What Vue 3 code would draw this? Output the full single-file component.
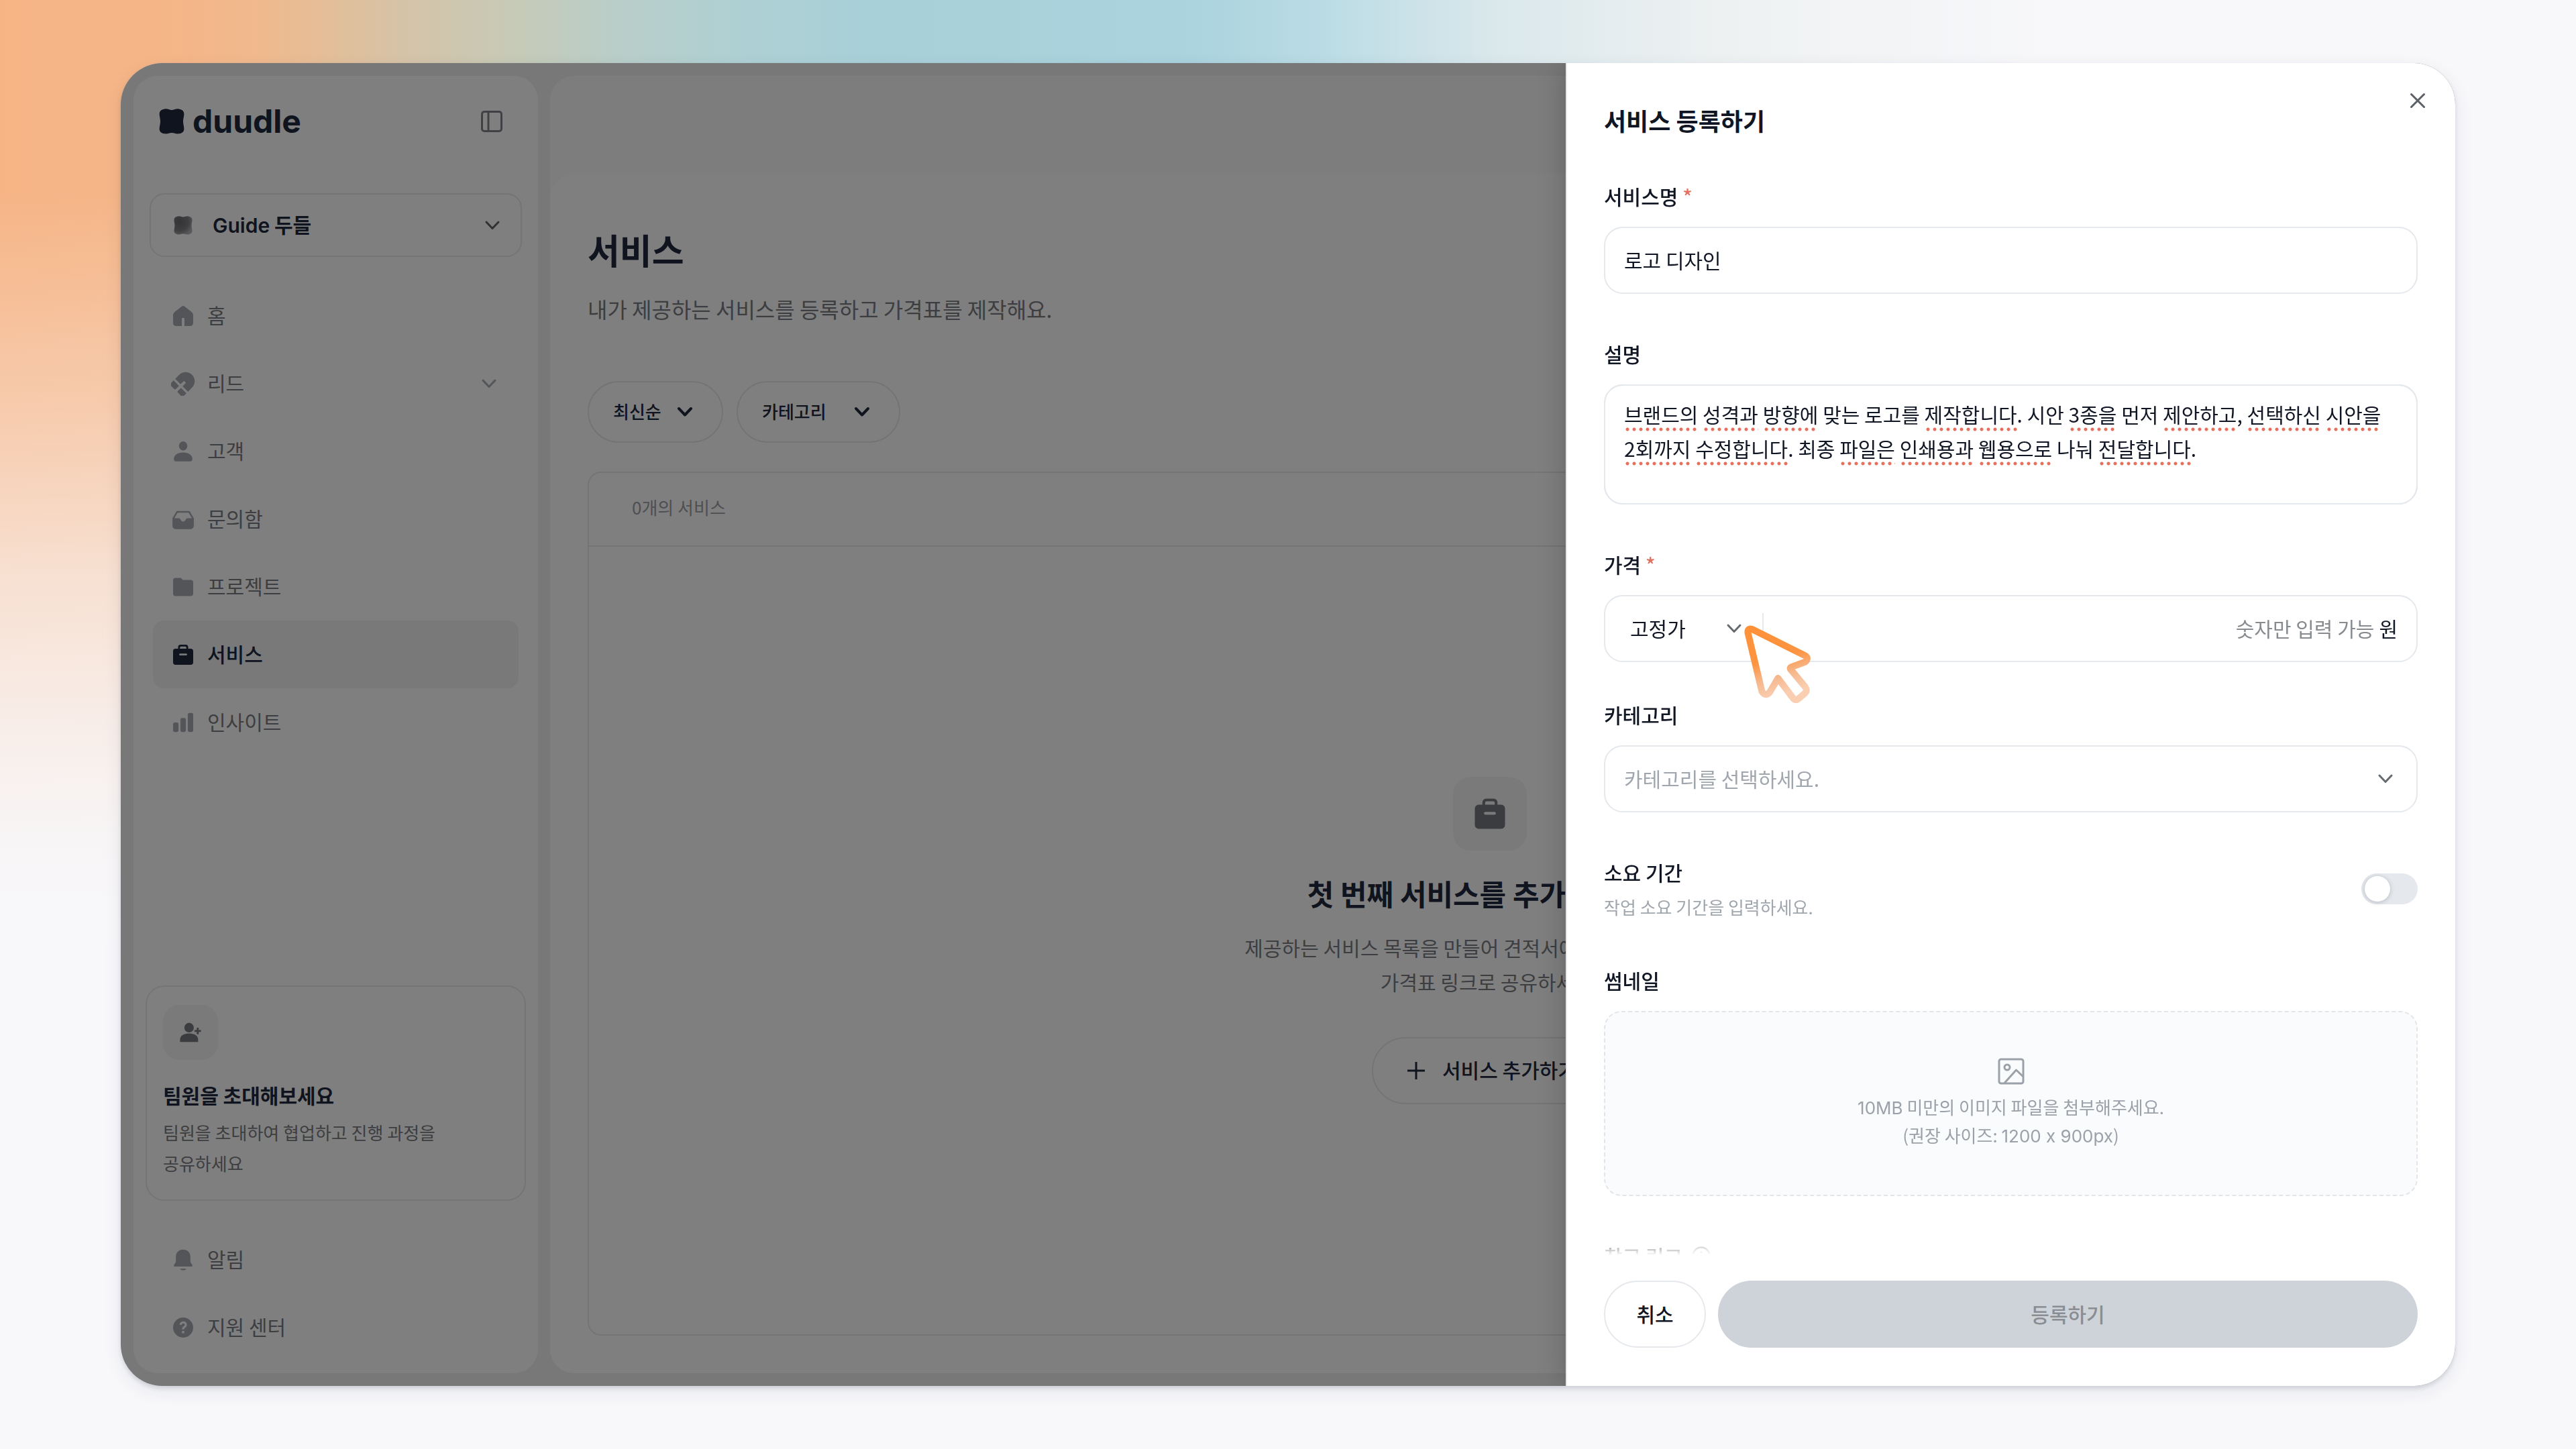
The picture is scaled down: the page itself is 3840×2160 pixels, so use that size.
<script setup>
import { ref } from 'vue'

const navItems = [
  { id: 'home', label: '홈' },
  { id: 'lead', label: '리드', expandable: true },
  { id: 'customer', label: '고객' },
  { id: 'inbox', label: '문의함' },
  { id: 'project', label: '프로젝트' },
  { id: 'service', label: '서비스', active: true },
  { id: 'insight', label: '인사이트' },
]

const supportItems = [
  { id: 'bell', label: '알림' },
  { id: 'help', label: '지원 센터' },
]

const icons = {
  home: '<path d="M10.4 2.7a2.6 2.6 0 0 1 3.2 0l7 5.4A3.6 3.6 0 0 1 22 11v8a3 3 0 0 1-3 3h-5.7v-8h-2.6v8H5a3 3 0 0 1-3-3v-8a3.6 3.6 0 0 1 1.4-2.9z"/>',
  lead: '<g transform="rotate(45 12 12)"><path d="M3 14.2V8.5a9 9 0 0 1 18 0v5.7h-7.6V9.4h-2.8v4.8z"/><path d="M3 16.4h7.6v4.2a1.4 1.4 0 0 1-1.4 1.4H4.4A1.4 1.4 0 0 1 3 20.6z"/><path d="M13.4 16.4H21v4.2a1.4 1.4 0 0 1-1.4 1.4h-4.8a1.4 1.4 0 0 1-1.4-1.4z"/></g>',
  customer: '<ellipse cx="12" cy="6.5" rx="4.2" ry="4.5"/><path d="M2.8 19.5C2.8 15.5 6.5 13 12 13s9.2 2.5 9.2 6.5c0 1.7-.8 2.3-2 2.3H4.800c-1.2 0-2-.6-2-2.3z"/>',
  inbox: '<path d="M6 4.7h12l3.800 6.6v7.4a2.3 2.3 0 0 1-2.3 2.3h-15a2.3 2.3 0 0 1-2.3-2.3v-7.4z" fill="none" stroke="currentColor" stroke-width="1.6" stroke-linejoin="round"/><path d="M2 11h5.500c1.200 0 1.600.8 2.100 1.700.5 1 1.200 1.700 2.400 1.700s1.900-.7 2.400-1.700c.5-.9.900-1.700 2.100-1.700H22v7.500a2.500 2.500 0 0 1-2.500 2.500h-15A2.500 2.500 0 0 1 2 18.500z"/>',
  project: '<path d="M2 5.500A2.500 2.500 0 0 1 4.500 3h4.200c.8 0 1.500.3 2 .900l1 1.100h7.800A2.500 2.500 0 0 1 22 7.500v11a2.500 2.500 0 0 1-2.500 2.500h-15A2.500 2.500 0 0 1 2 18.500z"/>',
  service: '<path fill-rule="evenodd" d="M7 6V4.500A2.500 2.500 0 0 1 9.500 2h5A2.500 2.500 0 0 1 17 4.500V6h2.500A2.500 2.500 0 0 1 22 8.500v11a2.500 2.500 0 0 1-2.500 2.500h-15A2.500 2.500 0 0 1 2 19.500v-11A2.500 2.500 0 0 1 4.500 6zm1.800 0h6.400V4.800a1 1 0 0 0-1-1H9.800a1 1 0 0 0-1 1zM9 10.800a.9.900 0 0 0 0 1.900h6a.9.900 0 0 0 0-1.900z"/>',
  insight: '<rect x="2" y="12" width="5.400" height="9.500" rx="1.600"/><rect x="9.300" y="7.500" width="5.400" height="14" rx="1.600"/><rect x="16.600" y="2.500" width="5.400" height="19" rx="1.600"/>',
  bell: '<path d="M12 1.800c-4.300 0-7.200 3-7.200 7v5.400l-1.900 2.900c-.5.800 0 1.500.8 1.500h16.600c.8 0 1.300-.7.800-1.500l-1.900-2.900V8.800c0-4-2.900-7-7.200-7z"/><path d="M9 20.800h6c-.3 1-1.400 1.600-3 1.600s-2.700-.6-3-1.600z"/>',
  help: '<path fill-rule="evenodd" d="M12 2a10 10 0 1 1 0 20 10 10 0 0 1 0-20zM8.600 9.400h2c0-1 .6-1.600 1.500-1.600s1.500.6 1.500 1.400c0 .8-.5 1.200-1.200 1.700-.9.600-1.400 1.200-1.400 2.500v.5h2v-.4c0-.6.300-.9 1-1.400 1-.7 1.700-1.500 1.700-2.900 0-2-1.500-3.300-3.600-3.300-2.200 0-3.500 1.400-3.500 3.500zM12 15.200a1.300 1.300 0 1 0 0 2.600 1.300 1.300 0 0 0 0-2.600z"/>',
}

const name = ref('로고 디자인')
const price = ref('')
const hasPeriod = ref(false)

// Each line is cut where the spelling check starts or ends; odd entries are the marked words
const lines = [
  ['', '브랜드의', ' ', '성격과', ' ', '방향에', ' 맞는 로고를 ', '제작합니다', '. 시안 ', '3종을', ' 먼저 ', '제안하고', ', ', '선택하신', ' ', '시안을'],
  ['', '2회까지', ' ', '수정합니다', '. 최종 ', '파일은', ' ', '인쇄용과', ' ', '웹용으로', ' 나눠 ', '전달합니다', '.'],
]
const description = ref(lines.map((line) => line.join('')).join(' '))

// Advance widths of the form's typeface in em
function advance(text) {
  let width = 0
  for (const char of text) {
    if (char === ' ') width += 0.224
    else if (char === '.' || char === ',') width += 0.278
    else if (char >= '0' && char <= '9') width += 0.555
    else width += 0.92
  }
  return width
}
const marks = lines.map((line) =>
  line.map((text, i) => ({ flagged: i % 2 === 1, width: `${advance(text).toFixed(3)}em` })),
)
</script>

<template>
  <div class="page">
    <div class="window">
      <aside class="sidebar">
        <header class="brand-row">
          <a class="brand" href="#">
            <svg class="brand-mark" viewBox="0 0 38 38" fill="currentColor" aria-hidden="true">
              <path d="M8 .6C13-.4 15 2 19 2S25-.4 30 .6c5 .9 7.700 3.400 7.300 8.400-.3 4-1.300 6-1.300 10s1 6 1.300 10c.4 5-2.300 7.500-7.300 8.300-5 .7-7-1.300-11-1.300s-6 2-11 1.300C3 36.500.3 34 .7 29 1 25 2 23 2 19S1 13 .7 9C.3 4 3 1.500 8 .6z" />
            </svg>
            <span class="brand-name">duudle</span>
          </a>
          <button class="icon-button" type="button" aria-label="사이드바 접기">
            <svg class="panel-icon" viewBox="0 0 32 32" fill="none" stroke="currentColor" stroke-width="3" aria-hidden="true">
              <rect x="1.500" y="1.500" width="29" height="29" rx="3.500" />
              <path d="M11 1.500v29" />
            </svg>
          </button>
        </header>

        <button class="workspace" type="button" aria-haspopup="listbox">
          <svg class="workspace-mark" viewBox="0 0 38 38" aria-hidden="true">
            <defs>
              <radialGradient id="mark-fill" cx=".3" cy=".3" r=".8">
                <stop offset="0" stop-color="#68686c" />
                <stop offset=".6" stop-color="#7c7c80" />
                <stop offset="1" stop-color="#b4b4b8" />
              </radialGradient>
            </defs>
            <path fill="url(#mark-fill)" d="M8 .6C13-.4 15 2 19 2S25-.4 30 .6c5 .9 7.700 3.400 7.300 8.400-.3 4-1.300 6-1.300 10s1 6 1.300 10c.4 5-2.300 7.500-7.300 8.300-5 .7-7-1.300-11-1.300s-6 2-11 1.300C3 36.500.3 34 .7 29 1 25 2 23 2 19S1 13 .7 9C.3 4 3 1.500 8 .6z" />
          </svg>
          <span class="workspace-name"><span class="latin">Guide</span> 두들</span>
          <svg class="chevron" viewBox="0 0 24 24" aria-hidden="true"><path d="M3 7l9 9.500L21 7" /></svg>
        </button>

        <nav class="nav" aria-label="주 메뉴">
          <a v-for="item in navItems" :key="item.id" class="nav-item" :class="{ active: item.active }" href="#">
            <svg class="nav-icon" viewBox="0 0 24 24" fill="currentColor" aria-hidden="true" v-html="icons[item.id]" />
            <span class="nav-label">{{ item.label }}</span>
            <svg v-if="item.expandable" class="chevron" viewBox="0 0 24 24" aria-hidden="true"><path d="M3 7l9 9.500L21 7" /></svg>
          </a>
        </nav>

        <section class="invite">
          <span class="invite-tile">
            <svg class="nav-icon" viewBox="0 0 24 24" fill="currentColor" aria-hidden="true">
              <circle cx="10.500" cy="7" r="5" />
              <path d="M1 19.500c0-4 3.800-6.500 9.500-6.500s9.500 2.500 9.500 6.500V22H1z" />
              <path d="M18.600 7h2v2.500H23v2h-2.400V14h-2v-2.500h-2.400v-2h2.400z" />
            </svg>
          </span>
          <h2 class="invite-title">팀원을 초대해보세요</h2>
          <p class="invite-text">팀원을 초대하여 협업하고 진행 과정을<br>공유하세요</p>
        </section>

        <nav class="nav support" aria-label="보조 메뉴">
          <a v-for="item in supportItems" :key="item.id" class="nav-item" href="#">
            <svg class="nav-icon" viewBox="0 0 24 24" fill="currentColor" aria-hidden="true" v-html="icons[item.id]" />
            <span class="nav-label">{{ item.label }}</span>
          </a>
        </nav>
      </aside>

      <main class="main">
        <div class="content">
          <h1 class="page-title">서비스</h1>
          <p class="page-text">내가 제공하는 서비스를 등록하고 가격표를 제작해요.</p>

          <div class="filters">
            <div class="stack">
              <select class="pill pill-sort" aria-label="정렬"><option>최신순</option></select>
              <svg class="chevron bold" viewBox="0 0 24 24" aria-hidden="true"><path d="M3 7l9 9.500L21 7" /></svg>
            </div>
            <div class="stack">
              <select class="pill pill-category" aria-label="카테고리 필터"><option>카테고리</option></select>
              <svg class="chevron bold" viewBox="0 0 24 24" aria-hidden="true"><path d="M3 7l9 9.500L21 7" /></svg>
            </div>
          </div>

          <section class="list">
            <header class="list-head">0개의 서비스</header>
            <div class="empty">
              <span class="empty-tile">
                <svg class="empty-icon" viewBox="0 0 24 24" fill="currentColor" aria-hidden="true" v-html="icons.service" />
              </span>
              <h2 class="empty-title">첫 번째 서비스를 추가해보세요</h2>
              <p class="empty-text">제공하는 서비스 목록을 만들어 견적서에 간편하게 활용하고<br>가격표 링크로 공유하세요.</p>
              <button class="add" type="button">
                <svg class="plus" viewBox="0 0 26 26" fill="none" stroke="currentColor" stroke-width="3" aria-hidden="true"><path d="M13 0v26M0 13h26" /></svg>
                <span class="add-label">서비스 추가하기</span>
              </button>
            </div>
          </section>
        </div>
      </main>

      <div class="scrim"></div>

      <form class="drawer" role="dialog" aria-labelledby="drawer-title" @submit.prevent>
        <button class="icon-button close" type="button" aria-label="닫기">
          <svg class="close-icon" viewBox="0 0 24 24" fill="none" stroke="currentColor" stroke-width="3" stroke-linecap="round" aria-hidden="true"><path d="M2.500 2.500l19 19M21.500 2.500l-19 19" /></svg>
        </button>
        <h2 id="drawer-title" class="drawer-title">서비스 등록하기</h2>

        <div class="fields">
          <div class="field">
            <label class="label" for="name">서비스명 <span class="required">*</span></label>
            <input id="name" v-model="name" class="box text-box" type="text">
          </div>

          <div class="field">
            <label class="label" for="description">설명</label>
            <div class="stack">
              <div class="box note" aria-hidden="true">
                <div v-for="(line, n) in marks" :key="n" class="mark-line">
                  <i v-for="(mark, i) in line" :key="i" :class="{ flagged: mark.flagged }" :style="{ width: mark.width }"></i>
                </div>
              </div>
              <textarea id="description" v-model="description" class="box note" spellcheck="false"></textarea>
            </div>
          </div>

          <div class="pair">
            <div class="field">
              <label class="label" for="price">가격 <span class="required">*</span></label>
              <div class="box price">
                <div class="stack">
                  <select class="price-type" aria-label="가격 유형"><option>고정가</option></select>
                  <svg class="chevron" viewBox="0 0 24 24" aria-hidden="true"><path d="M3 7l9 9.500L21 7" /></svg>
                </div>
                <input id="price" v-model="price" class="price-value" type="text" inputmode="numeric" placeholder="숫자만 입력 가능">
                <span class="unit">원</span>
                <svg class="pointer" viewBox="0 0 100 118" aria-hidden="true">
                  <defs>
                    <linearGradient id="pointer-line" x1="0" y1="0" x2="0.250" y2="1">
                      <stop offset="0" stop-color="#ff9138" />
                      <stop offset=".5" stop-color="#fd9441" />
                      <stop offset=".75" stop-color="#f6b78c" />
                      <stop offset="1" stop-color="#f9ceb1" />
                    </linearGradient>
                  </defs>
                  <path d="M11.500 5.800 91 45.500q5.500 3.500 1 8.500-1 1-3 1.500L70 62.500q-2 1-1 3L91 92q3.500 5 0 9l-10 8.500q-4.500 3.500-8-.5L50.500 79 38 100q-6 7-11.500-1L5.500 11q-.5-7 6-5.200z" fill="#fff" stroke="url(#pointer-line)" stroke-width="10" stroke-linejoin="round" />
                </svg>
              </div>
            </div>

            <div class="field">
              <label class="label" for="category">카테고리</label>
              <div class="stack">
                <select id="category" class="box text-box category"><option>카테고리를 선택하세요.</option></select>
                <svg class="chevron category-chevron" viewBox="0 0 24 24" aria-hidden="true"><path d="M3 7l9 9.500L21 7" /></svg>
              </div>
            </div>
          </div>

          <div class="period">
            <div>
              <label class="label" for="period">소요 기간</label>
              <p class="hint">작업 소요 기간을 입력하세요.</p>
            </div>
            <input id="period" v-model="hasPeriod" class="switch" type="checkbox" role="switch">
          </div>

          <div class="field">
            <span id="thumb-label" class="label">썸네일</span>
            <button class="upload" type="button" aria-labelledby="thumb-label">
              <svg class="image-icon" viewBox="0 0 40 40" fill="none" stroke="currentColor" stroke-width="3" stroke-linejoin="round" aria-hidden="true">
                <rect x="2" y="2" width="36" height="36" rx="3" />
                <circle cx="14" cy="14" r="4" />
                <path d="M10 37.500 27.500 18 38 28" />
              </svg>
              <span><span class="latin">10MB</span> 미만의 이미지 파일을 첨부해주세요.</span>
              <span>(권장 사이즈: <span class="latin">1200 x 900px</span>)</span>
            </button>
          </div>

          <div class="field">
            <label class="label link-label" for="link">참고 링크
              <svg class="info" viewBox="0 0 28 28" fill="none" stroke="currentColor" stroke-width="2.500" aria-hidden="true"><circle cx="14" cy="14" r="12.500" /><path d="M14 12.500v8M14 7.500v2.500" /></svg>
            </label>
            <input id="link" class="box text-box" type="url">
          </div>
        </div>

        <footer class="actions">
          <button class="cancel" type="button">취소</button>
          <button class="submit" type="submit" disabled>등록하기</button>
        </footer>
      </form>
    </div>
  </div>
</template>

<style>
body {
  margin: 0;
  background: #f8f8fb;
}
</style>

<style scoped>
* {
  box-sizing: border-box;
}

.page {
  display: grid;
  min-height: 100vh;
  padding: 94px 180px;
  font-family: "Noto Sans CJK KR", "Noto Sans", sans-serif;
  font-size: 30px;
  line-height: 36px;
  color: #20283e;
  background:
    linear-gradient(to bottom, rgba(248, 248, 251, 0) 0, rgba(248, 248, 251, 0) 13%, rgba(248, 248, 251, .15) 20%, rgba(248, 248, 251, .38) 30%, rgba(248, 248, 251, .65) 40%, rgba(248, 248, 251, .84) 50%, rgba(248, 248, 251, .96) 58%, #f8f8fb 66%),
    linear-gradient(to right, #f6b485 0, #f5b688 7%, #f0b98e 10%, #e2bf9a 13%, #d4c4a9 16%, #c6cab7 20%, #b9cec9 24%, #aed0d4 29%, #a8d0d8 34%, #aad3de 46%, #b9dbe4 51%, #dae8ec 58%, #eef1f2 67%, #f8f8fb 80%);
}

h1, h2, p {
  margin: 0;
}

button, input, select, textarea {
  margin: 0;
  font: inherit;
  color: inherit;
}

button, select {
  cursor: pointer;
}

select {
  appearance: none;
}

a {
  color: inherit;
  text-decoration: none;
}

.latin {
  font-family: Inter, "Noto Sans", sans-serif;
  line-height: 1;
}

.window {
  position: relative;
  display: flex;
  gap: 18px;
  min-height: calc(100vh - 188px);
  padding: 19px;
  overflow: hidden;
  border-radius: 62px;
  background: #f0f0f1;
  box-shadow: 0 4px 6px rgba(30, 50, 80, .14), 0 8px 28px rgba(30, 40, 60, .08);
}

.icon-button {
  display: flex;
  padding: 0;
  border: 0;
  background: none;
}

.chevron {
  width: 24px;
  height: 24px;
  fill: none;
  stroke: currentColor;
  stroke-width: 3;
  stroke-linecap: round;
  stroke-linejoin: round;
}

.stack {
  display: grid;
  align-items: center;
}

.stack > * {
  grid-area: 1 / 1;
}

.stack > .chevron {
  justify-self: end;
  pointer-events: none;
}

/* Sidebar */
.sidebar {
  display: flex;
  flex: none;
  flex-direction: column;
  width: 603px;
  padding: 18px;
  border-radius: 36px;
  background: #fff;
}

.brand-row {
  display: flex;
  align-items: center;
  justify-content: space-between;
  height: 100px;
  margin-bottom: 57px;
  padding: 0 35px 0 20px;
}

.brand {
  display: flex;
  align-items: center;
  gap: 12px;
}

.brand-mark {
  width: 38px;
  height: 38px;
}

.brand-name {
  font-family: Inter, "Noto Sans", sans-serif;
  font-size: 48px;
  font-weight: 700;
  line-height: 48px;
}

.panel-icon {
  width: 32px;
  height: 32px;
  color: #808288;
}

.workspace {
  display: flex;
  align-items: center;
  height: 95px;
  margin: 0 6px 37px;
  padding: 0 30px 0 34px;
  border: 2px solid #e8e9eb;
  border-radius: 22px;
  background: #fff;
}

.workspace-mark {
  width: 28px;
  height: 28px;
}

.workspace-name {
  flex: 1;
  margin-left: 30px;
  padding-bottom: 3px;
  font-weight: 600;
  text-align: left;
}

.workspace .chevron {
  color: #606268;
}

.nav {
  display: flex;
  flex-direction: column;
  margin: 0 11px;
}

.nav-item {
  display: flex;
  align-items: center;
  gap: 18px;
  height: 101px;
  padding: 0 32px 0 27px;
  border-radius: 16px;
  color: #a8aab1;
}

.nav-icon {
  flex: none;
  width: 36px;
  height: 36px;
}

.nav-label {
  flex: 1;
  padding-bottom: 4px;
  color: #7a7c82;
}

.nav-item.active {
  background: #f2f2f4;
  color: #20283e;
}

.active .nav-label {
  color: #20283e;
  font-weight: 500;
}

.invite {
  margin: auto 0 37px;
  padding: 27px 24px 31px;
  border: 2px solid #e8e9eb;
  border-radius: 28px;
}

.invite-tile {
  display: flex;
  align-items: center;
  justify-content: center;
  width: 82px;
  height: 82px;
  margin-bottom: 32px;
  border-radius: 24px;
  background: #f4f4f6;
  color: #76787e;
}

.invite-tile .nav-icon {
  width: 34px;
  height: 34px;
}

.invite-title {
  margin-bottom: 13px;
  font-size: 30px;
  font-weight: 600;
  line-height: 40px;
}

.invite-text {
  color: #7a7c82;
  font-size: 26px;
  line-height: 46px;
}

/* Main area */
.main {
  display: flex;
  flex: 1;
  flex-direction: column;
  min-width: 0;
  padding-top: 146px;
  border-radius: 36px;
  background: #fafafb;
}

.content {
  display: flex;
  flex: 1;
  flex-direction: column;
  padding: 83px 76px 56px 56px;
  border-radius: 36px;
  background: #fff;
}

.page-title {
  margin-bottom: 36px;
  font-size: 52px;
  font-weight: 600;
  line-height: 60px;
}

.page-text {
  margin-bottom: 86px;
  color: #7a7c82;
  font-size: 32px;
  line-height: 44px;
}

.filters {
  display: flex;
  gap: 20px;
  margin-bottom: 43px;
}

.pill {
  height: 92px;
  padding: 0 36px 2px;
  border: 2px solid #e8e9eb;
  border-radius: 46px;
  background: #fff;
  font-size: 26px;
  font-weight: 500;
}

.pill-sort {
  width: 202px;
}

.pill-category {
  width: 244px;
}

.filters .chevron {
  margin-right: 45px;
}

.bold {
  stroke-width: 4;
}

.list {
  display: flex;
  flex: 1;
  flex-direction: column;
  border: 2px solid #e8e9eb;
  border-radius: 20px;
}

.list-head {
  height: 110px;
  padding-left: 64px;
  border-bottom: 2px solid #e8e9eb;
  color: #9c9ea6;
  font-size: 26px;
  line-height: 102px;
}

.empty {
  display: flex;
  flex: 1;
  flex-direction: column;
  align-items: center;
  justify-content: center;
  text-align: center;
}

.empty-tile {
  display: flex;
  align-items: center;
  justify-content: center;
  width: 110px;
  height: 110px;
  margin-bottom: 33px;
  border-radius: 26px;
  background: #f4f4f6;
  color: #76787e;
}

.empty-icon {
  width: 54px;
  height: 54px;
}

.empty-title {
  margin-bottom: 26px;
  font-size: 43px;
  font-weight: 600;
  line-height: 60px;
}

.empty-text {
  margin-bottom: 57px;
  color: #7a7c82;
  line-height: 51px;
}

.add {
  display: flex;
  align-items: center;
  gap: 26px;
  height: 100px;
  padding: 0 44px 0 51px;
  border: 2px solid #e8e9eb;
  border-radius: 50px;
  background: #fff;
  font-weight: 500;
}

.add-label {
  padding-bottom: 4px;
}

.plus {
  width: 26px;
  height: 26px;
}

.scrim {
  position: absolute;
  inset: 0;
  background: rgba(0, 0, 0, .5);
}

/* Drawer */
.drawer {
  position: absolute;
  inset: 0 0 0 auto;
  display: flex;
  flex-direction: column;
  width: min(1326px, 100%);
  padding: 61px 56px 57px 55px;
  border-left: 2px solid #e8e8ea;
  background: #fff;
  box-shadow: 0 0 40px rgba(0, 0, 0, .22);
  color: #111624;
}

.close {
  position: absolute;
  top: 44px;
  right: 44px;
  color: #5b6066;
}

.close-icon {
  width: 24px;
  height: 24px;
}

.drawer-title {
  font-size: 36px;
  font-weight: 600;
  line-height: 48px;
}

.fields {
  display: flex;
  flex: 1 1 0;
  flex-direction: column;
  gap: 73px;
  min-height: 0;
  padding-top: 73px;
  overflow: hidden;
  -webkit-mask-image: linear-gradient(to top, transparent 0, #000 36px);
  mask-image: linear-gradient(to top, transparent 0, #000 36px);
}

.field {
  display: flex;
  flex: none;
  flex-direction: column;
  gap: 30px;
}

.pair {
  display: flex;
  flex: none;
  flex-direction: column;
  gap: 62px;
}

.label {
  display: block;
  font-weight: 500;
  line-height: 32px;
}

.required {
  color: #e2725f;
}

.box {
  width: 100%;
  border: 2px solid #e5e8ec;
  border-radius: 28px;
  outline: 0;
  background: #fff;
}

.text-box {
  height: 100px;
  padding: 0 28px 3px;
}

.note {
  display: block;
  height: 179px;
  padding: 17px 28px;
  overflow: hidden;
  line-height: 51px;
  resize: none;
  word-break: keep-all;
}

textarea.note {
  background: transparent;
}

.mark-line {
  display: flex;
  align-items: flex-end;
  height: 51px;
}

.flagged {
  height: 6px;
  background: radial-gradient(circle, #e6705c 2px, transparent 3px) 0 0 / 10px 6px repeat-x;
}

.price {
  position: relative;
  display: flex;
  align-items: center;
  height: 100px;
  padding-right: 28px;
}

.price-type {
  width: 236px;
  height: 46px;
  padding: 0 60px 3px 37px;
  border: 0;
  border-right: 2px solid #e5e8ec;
  outline: 0;
  background: none;
  line-height: 42px;
}

.price .chevron {
  margin-right: 32px;
  color: #666b70;
}

.price-value {
  flex: 1;
  min-width: 0;
  padding: 0 0 3px;
  border: 0;
  outline: 0;
  background: none;
  text-align: right;
}

.price-value::placeholder {
  color: #878b8f;
  opacity: 1;
}

.unit {
  margin-left: 7px;
  padding-bottom: 3px;
}

.pointer {
  position: absolute;
  top: 43px;
  left: 207px;
  width: 100px;
  height: 118px;
  z-index: 1;
  pointer-events: none;
}

.category {
  color: #a0a6ad;
}

.category-chevron {
  margin-right: 36px;
  color: #666b70;
}

.period {
  display: flex;
  flex: none;
  align-items: flex-start;
  justify-content: space-between;
}

.hint {
  margin-top: 16px;
  color: #a0a6ad;
  font-size: 26px;
  line-height: 40px;
}

.switch {
  display: flex;
  align-items: center;
  width: 84px;
  height: 46px;
  margin-top: 18px;
  padding: 0 5px;
  appearance: none;
  border-radius: 23px;
  background: #e5e8ec;
}

.switch::before {
  width: 38px;
  height: 38px;
  border-radius: 50%;
  background: #fff;
  box-shadow: 0 1px 6px rgba(60, 80, 100, .3);
  content: "";
}

.switch:checked {
  justify-content: flex-end;
}

.upload {
  display: flex;
  flex-direction: column;
  align-items: center;
  justify-content: center;
  height: 276px;
  padding: 0;
  border: 2px dashed #e2e5e9;
  border-radius: 26px;
  background: #fafbfd;
  color: #9ba1a8;
  font-size: 26px;
  line-height: 42px;
}

.image-icon {
  width: 40px;
  height: 40px;
  margin-bottom: 12px;
}

.link-label {
  display: flex;
  align-items: center;
  gap: 14px;
}

.info {
  width: 28px;
  height: 28px;
  color: #8b9096;
}

.actions {
  display: flex;
  gap: 18px;
  padding-top: 38px;
}

.cancel,
.submit {
  height: 100px;
  padding: 0 0 2px;
  border: 2px solid #e5e8ec;
  border-radius: 50px;
  background: #fff;
  font-weight: 500;
}

.cancel {
  width: 152px;
}

.submit {
  flex: 1;
  border: 0;
  background: #ced3da;
  color: #8a8d92;
}
</style>
